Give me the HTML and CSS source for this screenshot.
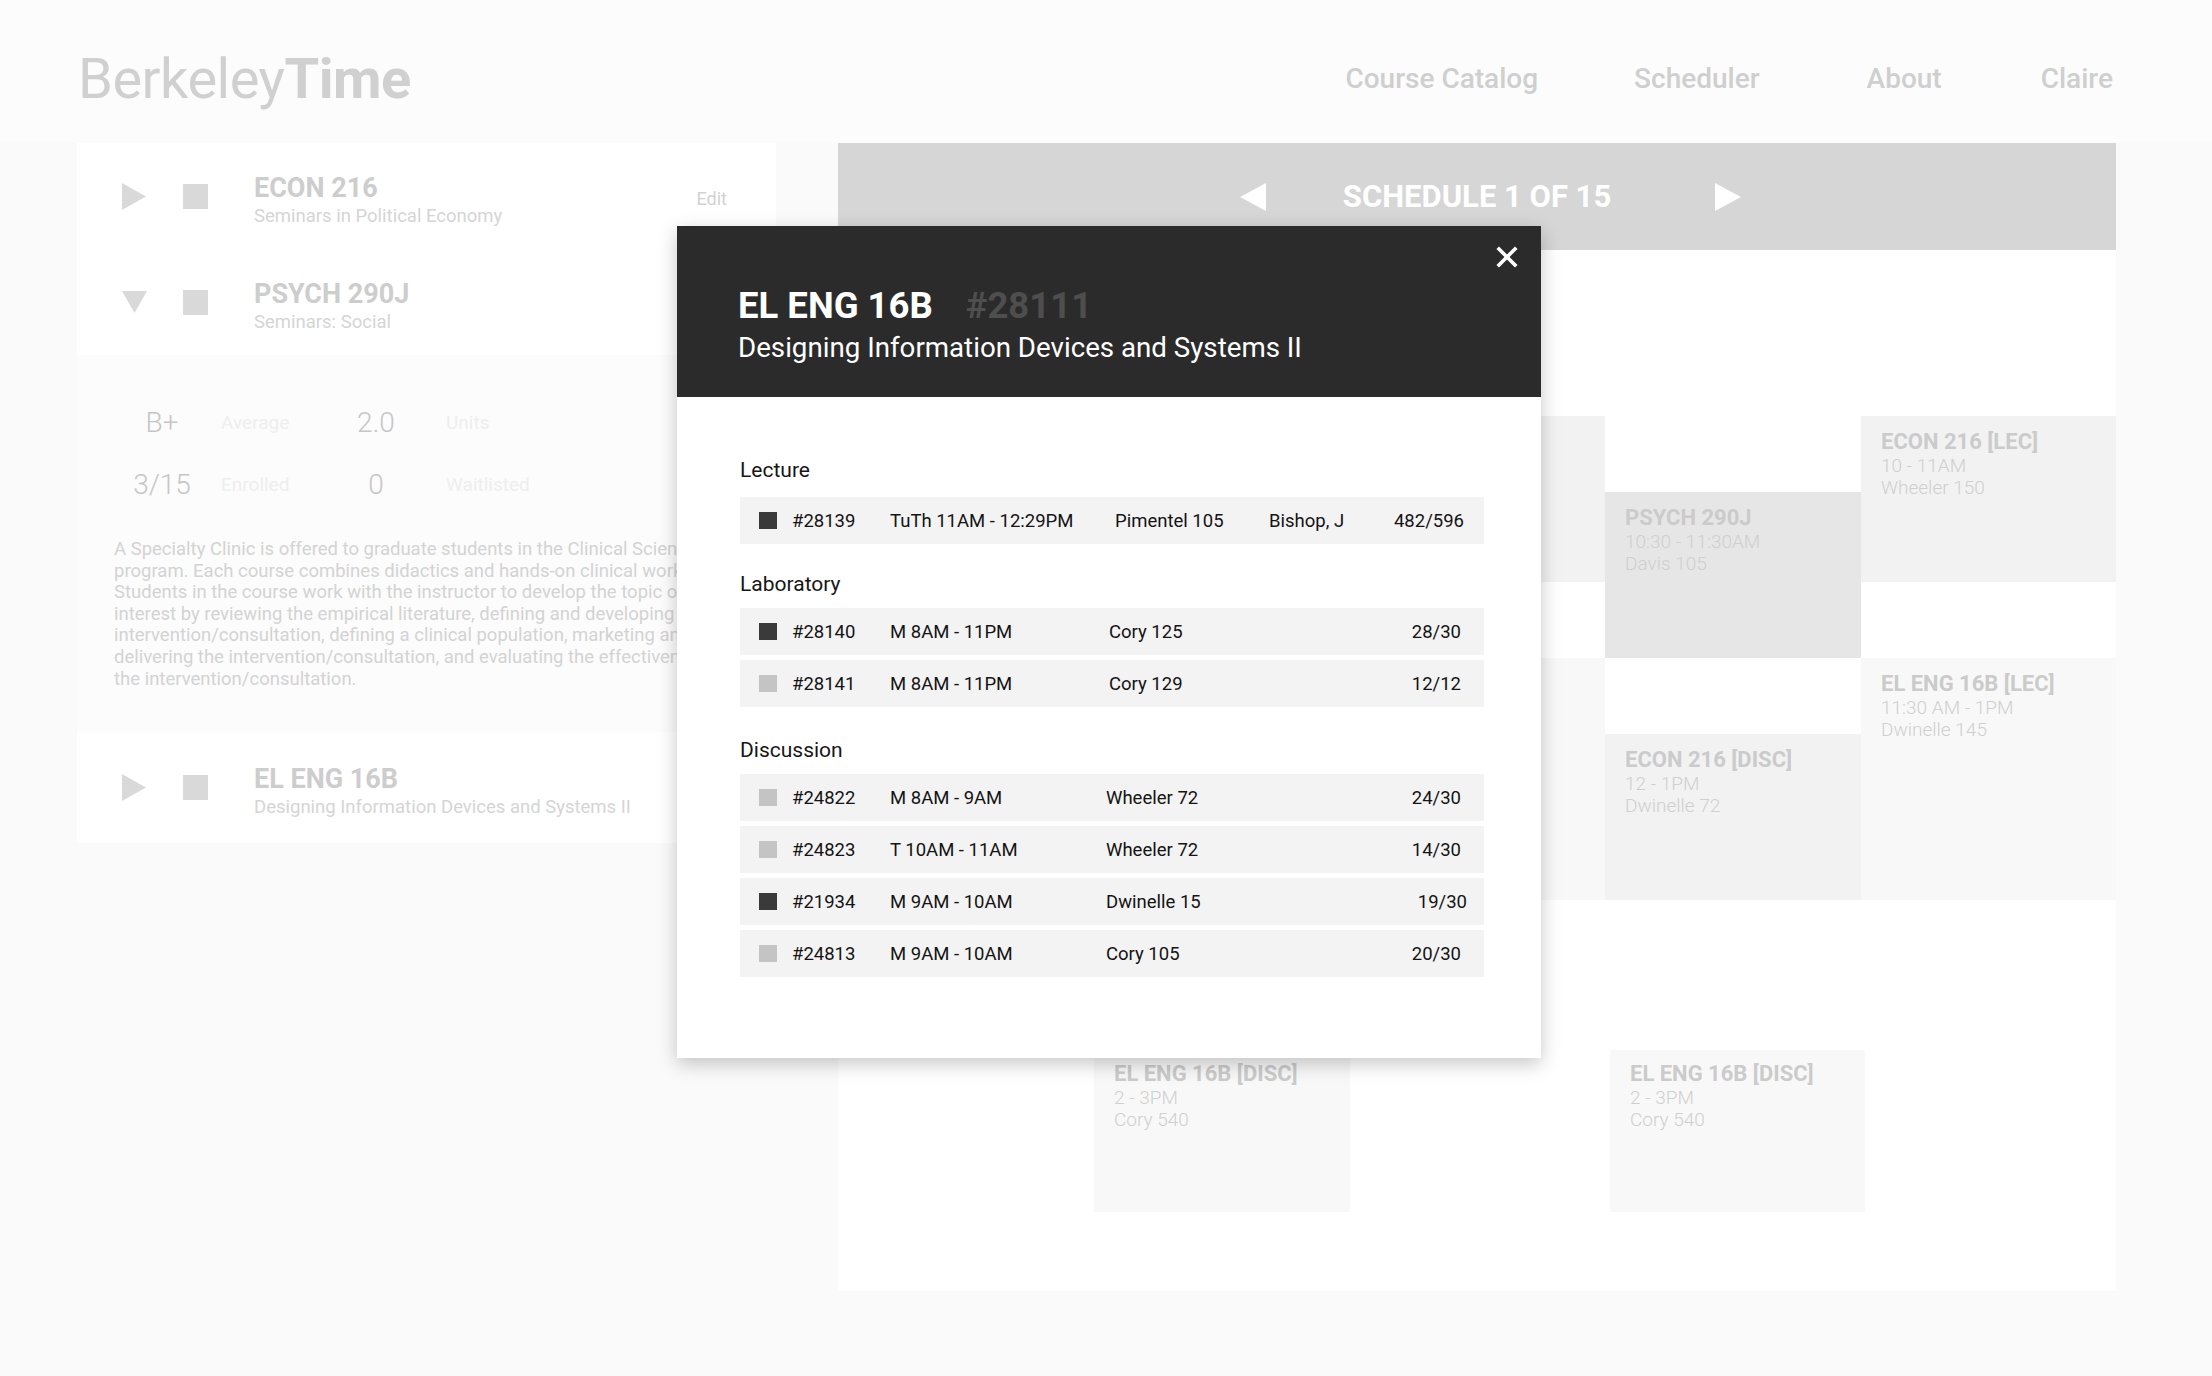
FILE: index.html
```html
<!DOCTYPE html>
<html lang="en">
<head>
<meta charset="utf-8">
<title>BerkeleyTime Scheduler</title>
<link rel="stylesheet" href="styles.css">
</head>
<body>
<div class="page">
  <header class="topbar">
    <div class="logo"><span class="logo-light">Berkeley</span><span class="logo-bold">Time</span></div>
    <nav class="nav">
      <a class="nav-item nav-catalog">Course Catalog</a>
      <a class="nav-item nav-scheduler">Scheduler</a>
      <a class="nav-item nav-about">About</a>
      <a class="nav-item">Claire</a>
    </nav>
  </header>

  <main class="main">
    <aside class="sidebar">
      <div class="card">
        <div class="course-row">
          <span class="tri"><svg width="24" height="27" viewBox="0 0 24 27"><polygon points="0,0 24,13.5 0,27" fill="#d9d9d9"/></svg></span>
          <span class="swatch"></span>
          <div class="course-text">
            <div class="course-title">ECON 216</div>
            <div class="course-sub">Seminars in Political Economy</div>
          </div>
          <span class="edit">Edit</span>
        </div>
        <div class="course-row">
          <span class="tri"><svg width="25" height="22" viewBox="0 0 25 22"><polygon points="0,0 25,0 12.5,22" fill="#d9d9d9"/></svg></span>
          <span class="swatch"></span>
          <div class="course-text">
            <div class="course-title">PSYCH 290J</div>
            <div class="course-sub">Seminars: Social</div>
          </div>
        </div>
      </div>

      <div class="details">
        <div class="stats">
          <span class="stat-val">B+</span><span class="stat-label">Average</span>
          <span class="stat-val">2.0</span><span class="stat-label stat-label-2">Units</span>
          <span class="stat-val">3/15</span><span class="stat-label">Enrolled</span>
          <span class="stat-val">0</span><span class="stat-label stat-label-2">Waitlisted</span>
        </div>
        <p class="desc">A Specialty Clinic is offered to graduate students in the Clinical Science<br>program. Each course combines didactics and hands-on clinical work.<br>Students in the course work with the instructor to develop the topic of<br>interest by reviewing the empirical literature, defining and developing the<br>intervention/consultation, defining a clinical population, marketing and<br>delivering the intervention/consultation, and evaluating the effectiveness of<br>the intervention/consultation.</p>
      </div>

      <div class="card">
        <div class="course-row course-row-tall">
          <span class="tri"><svg width="24" height="27" viewBox="0 0 24 27"><polygon points="0,0 24,13.5 0,27" fill="#d9d9d9"/></svg></span>
          <span class="swatch"></span>
          <div class="course-text">
            <div class="course-title">EL ENG 16B</div>
            <div class="course-sub">Designing Information Devices and Systems II</div>
          </div>
        </div>
      </div>
    </aside>

    <section class="schedule">
      <div class="schedule-head">
        <svg class="arrow" width="26" height="28" viewBox="0 0 26 28"><polygon points="26,0 26,28 0,14" fill="#fff"/></svg>
        <span class="schedule-title">SCHEDULE 1 OF 15</span>
        <svg class="arrow" width="26" height="28" viewBox="0 0 26 28"><polygon points="0,0 26,14 0,28" fill="#fff"/></svg>
      </div>
      <div class="schedule-body">
        <div class="event ev-mid" style="left:512px;top:166px;width:255px;height:166px"></div>
        <div class="event ev-light" style="left:512px;top:408px;width:255px;height:242px"></div>
        <div class="event ev-dark" style="left:767px;top:242px;width:256px;height:166px">
          <div class="ev-title">PSYCH 290J</div><div class="ev-line">10:30 - 11:30AM</div><div class="ev-line">Davis 105</div>
        </div>
        <div class="event ev-mid" style="left:1023px;top:166px;width:255px;height:166px">
          <div class="ev-title">ECON 216 [LEC]</div><div class="ev-line">10 - 11AM</div><div class="ev-line">Wheeler 150</div>
        </div>
        <div class="event ev-light" style="left:1023px;top:408px;width:255px;height:242px">
          <div class="ev-title">EL ENG 16B [LEC]</div><div class="ev-line">11:30 AM - 1PM</div><div class="ev-line">Dwinelle 145</div>
        </div>
        <div class="event ev-mid" style="left:767px;top:484px;width:256px;height:166px">
          <div class="ev-title">ECON 216 [DISC]</div><div class="ev-line">12 - 1PM</div><div class="ev-line">Dwinelle 72</div>
        </div>
        <div class="event ev-light ev-short" style="left:256px;top:800px;width:256px;height:162px">
          <div class="ev-title">EL ENG 16B [DISC]</div><div class="ev-line">2 - 3PM</div><div class="ev-line">Cory 540</div>
        </div>
        <div class="event ev-light ev-short" style="left:772px;top:800px;width:255px;height:162px">
          <div class="ev-title">EL ENG 16B [DISC]</div><div class="ev-line">2 - 3PM</div><div class="ev-line">Cory 540</div>
        </div>
      </div>
    </section>
  </main>

  <div class="modal">
    <div class="modal-head">
      <svg class="close" width="22" height="22" viewBox="0 0 22 22"><path d="M3 3 L19 19 M19 3 L3 19" stroke="#fff" stroke-width="3.6" stroke-linecap="square"/></svg>
      <div class="modal-title">EL ENG 16B<span class="modal-ccn">#28111</span></div>
      <div class="modal-sub">Designing Information Devices and Systems II</div>
    </div>
    <div class="modal-body">
      <div class="sec-label sec-label-lec">Lecture</div>
      <div class="sec-rows sec-rows-lec">
        <div class="row row-lec"><span class="sq sq-on"></span><span>#28139</span><span>TuTh 11AM - 12:29PM</span><span>Pimentel 105</span><span>Bishop, J</span><span class="enr">482/596</span></div>
      </div>
      <div class="sec-label">Laboratory</div>
      <div class="sec-rows sec-rows-lab">
        <div class="row"><span class="sq sq-on"></span><span>#28140</span><span>M 8AM - 11PM</span><span>Cory 125</span><span class="enr">28/30</span></div>
        <div class="row"><span class="sq"></span><span>#28141</span><span>M 8AM - 11PM</span><span>Cory 129</span><span class="enr">12/12</span></div>
      </div>
      <div class="sec-label">Discussion</div>
      <div class="sec-rows">
        <div class="row row-disc"><span class="sq"></span><span>#24822</span><span>M 8AM - 9AM</span><span>Wheeler 72</span><span class="enr">24/30</span></div>
        <div class="row row-disc"><span class="sq"></span><span>#24823</span><span>T 10AM - 11AM</span><span>Wheeler 72</span><span class="enr">14/30</span></div>
        <div class="row row-disc row-wide"><span class="sq sq-on"></span><span>#21934</span><span>M 9AM - 10AM</span><span>Dwinelle 15</span><span class="enr">19/30</span></div>
        <div class="row row-disc"><span class="sq"></span><span>#24813</span><span>M 9AM - 10AM</span><span>Cory 105</span><span class="enr">20/30</span></div>
      </div>
    </div>
  </div>
</div>
</body>
</html>
```

FILE: styles.css
```css
* { box-sizing: border-box; }
html, body { margin: 0; padding: 0; }
body {
  background: #fafafa;
  font-family: Roboto, "Liberation Sans", Arial, sans-serif;
  width: 2212px;
  height: 1376px;
  overflow: hidden;
}
.page { position: relative; width: 2212px; height: 1376px; }

/* top bar */
.topbar {
  height: 143px;
  display: flex;
  justify-content: space-between;
  align-items: flex-start;
  padding: 0 99px 0 78px;
  background: #fcfcfc;
}
.logo {
  margin-top: 51px;
  font-size: 56px;
  line-height: 1;
  color: #d0d0d0;
  letter-spacing: -0.5px;
}
.logo-light { font-weight: 400; }
.logo-bold { font-weight: 700; }
.nav { display: flex; margin-top: 65px; }
.nav-item {
  font-size: 28px;
  line-height: 1;
  font-weight: 500;
  color: #cfcfcf;
}
.nav-catalog { margin-right: 96px; }
.nav-scheduler { margin-right: 107px; }
.nav-about { margin-right: 99px; }

/* main */
.main { display: flex; align-items: flex-start; padding-left: 77px; }
.sidebar { width: 699px; display: flex; flex-direction: column; }
.card { background: #ffffff; }
.course-row {
  height: 106px;
  display: flex;
  align-items: center;
  padding: 0 49px 0 45px;
}
.course-row-tall { height: 111px; }
.tri { width: 25px; display: flex; align-items: center; margin-right: 36px; }
.swatch { width: 25px; height: 25px; background: #d9d9d9; margin-right: 46px; flex: none; }
.course-text { flex: 1; padding-top: 6px; }
.course-title { font-size: 27px; line-height: 33px; font-weight: 700; color: #cdcdcd; }
.course-sub { font-size: 18.5px; line-height: 22px; color: #d5d5d5; }
.edit { font-size: 18px; color: #d2d2d2; margin-top: 4px; }

.details {
  height: 377px;
  background: #fcfcfc;
  padding: 37px 0 0 37px;
  overflow: hidden;
}
.stats {
  display: grid;
  grid-template-columns: 90px 124px 90px 1fr;
  padding-left: 3px;
}
.stat-val {
  font-size: 28px;
  line-height: 62px;
  font-weight: 300;
  color: #c6c6c6;
  text-align: center;
}
.stat-label {
  font-size: 19px;
  line-height: 62px;
  color: #eeeeee;
  padding-left: 14px;
}
.stat-label-2 { padding-left: 25px; }
.desc {
  margin: 23px 0 0;
  font-size: 18.5px;
  line-height: 21.6px;
  color: #d3d3d3;
  white-space: nowrap;
}

/* schedule */
.schedule { margin-left: 62px; width: 1278px; }
.schedule-head {
  height: 107px;
  background: #d6d6d6;
  display: flex;
  align-items: center;
  justify-content: center;
  padding-left: 27px;
}
.schedule-title {
  font-size: 31px;
  font-weight: 700;
  color: #ffffff;
  margin: 0 104px 0 77px;
}
.schedule-body {
  position: relative;
  height: 1041px;
  background: #ffffff;
}
.event { position: absolute; padding: 13px 20px 0; overflow: hidden; }
.ev-short { padding-top: 11px; }
.ev-dark { background: #e6e6e6; }
.ev-mid { background: #f2f2f2; }
.ev-light { background: #f8f8f8; }
.ev-title { font-size: 22px; line-height: 26px; font-weight: 700; color: #cbcbcb; white-space: nowrap; }
.ev-line { font-size: 19px; line-height: 21.5px; font-weight: 300; color: #cfcfcf; white-space: nowrap; }

/* modal */
.modal {
  position: absolute;
  left: 677px;
  top: 226px;
  width: 864px;
  height: 832px;
  background: #ffffff;
  box-shadow: 0 6px 18px rgba(0, 0, 0, 0.22);
}
.modal-head {
  position: relative;
  height: 171px;
  background: #2b2b2b;
  padding: 62px 0 0 61px;
}
.close { position: absolute; right: 23px; top: 20px; }
.modal-title {
  font-size: 36.5px;
  line-height: 36px;
  font-weight: 700;
  color: #ffffff;
}
.modal-ccn { color: #4e4e4e; margin-left: 33px; }
.modal-sub {
  margin-top: 7px;
  font-size: 27.7px;
  line-height: 33px;
  color: #ffffff;
}
.modal-body { padding: 61px 57px 0 63px; }
.sec-label {
  font-size: 21px;
  line-height: 25px;
  color: #161616;
  margin-bottom: 11px;
}
.sec-label-lec { margin-bottom: 14px; }
.sec-rows { display: flex; flex-direction: column; gap: 5px; }
.sec-rows-lec { margin-bottom: 28px; }
.sec-rows-lab { margin-bottom: 31px; }
.row {
  height: 47px;
  background: #f3f3f3;
  display: grid;
  grid-template-columns: 18px 113px 219px 1fr auto;
  align-items: center;
  padding: 0 23px 0 19px;
  font-size: 18.5px;
  color: #141414;
}
.row > span:nth-child(2) { padding-left: 15px; }
.row-lec { grid-template-columns: 18px 113px 225px 154px 1fr auto; padding-right: 20px; }
.row-disc { grid-template-columns: 18px 113px 216px 1fr auto; }
.row-wide { padding-right: 17px; }
.sq { width: 18px; height: 17px; background: #c4c4c4; }
.sq-on { background: #3a3a3a; }
.enr { text-align: right; }
```
